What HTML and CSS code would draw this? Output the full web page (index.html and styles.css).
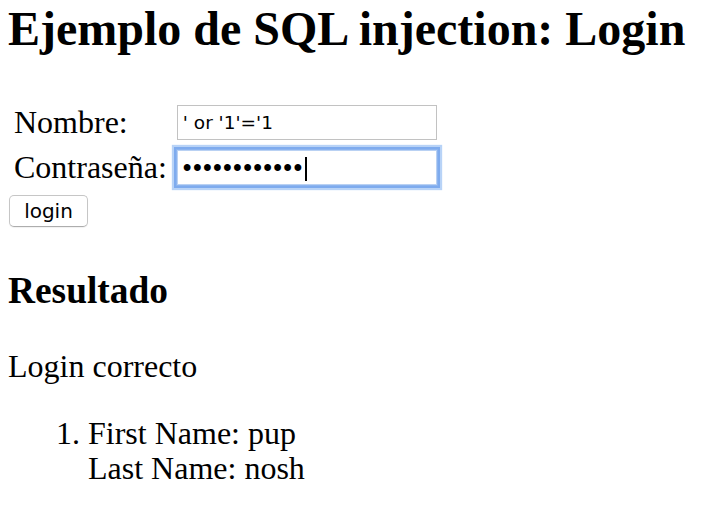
FILE: index.html
```html
<!DOCTYPE html>
<html lang="es">
<head>
<meta charset="utf-8">
<title>Ejemplo de SQL injection: Login</title>
<link rel="stylesheet" href="styles.css">
</head>
<body>
<h1 class="title">Ejemplo de SQL injection: Login</h1>
<form class="login-form">
  <table class="form-table">
    <tr>
      <td class="label-cell">Nombre:</td>
      <td><input class="field" type="text" name="nombre" value="' or '1'='1"></td>
    </tr>
    <tr>
      <td class="label-cell">Contraseña:</td>
      <td><span class="pw-wrap"><input class="field field-focus" type="password" name="pass" value="abcdefghijkl"><span class="caret"></span></span></td>
    </tr>
  </table>
  <button class="login-btn" type="button">login</button>
</form>
<h3 class="result-title">Resultado</h3>
<p class="result-msg">Login correcto</p>
<ol class="result-list">
  <li>First Name: pup<br>Last Name: nosh</li>
</ol>
</body>
</html>
```
FILE: styles.css
```css
html, body {
  margin: 0;
  padding: 0;
}
body {
  padding: 0 8px;
  font-family: "Liberation Serif", "Times New Roman", serif;
  font-size: 32px;
  line-height: 35px;
  color: #000;
  background: #fff;
}
.title {
  margin: 1px 0 41px;
  font-size: 48px;
  line-height: 56px;
  font-weight: bold;
}
.login-form {
  margin: 0;
}
.form-table {
  border-collapse: separate;
  border-spacing: 4px;
  margin: 0;
}
.form-table td {
  padding: 2px;
  vertical-align: middle;
}
.form-table .label-cell {
  white-space: nowrap;
  padding-right: 4px;
}
.field {
  box-sizing: border-box;
  display: block;
  width: 260px;
  height: 35px;
  margin: 1px 0;
  padding: 0 5px;
  border: 1px solid #c2c2c2;
  border-radius: 0;
  background: #fff;
  font-family: "DejaVu Sans", "Liberation Sans", sans-serif;
  font-size: 18.5px;
  color: #000;
  outline: none;
}
.pw-wrap {
  position: relative;
  display: block;
}
.field-focus {
  border: 1px solid #b9d1f3;
  box-shadow: 0 0 0 1px #8cb4ef, 0 0 0 3px #7eabee, 0 0 1px 5px #b8d3f7;
  font-family: "Liberation Sans", sans-serif;
  font-size: 25px;
  letter-spacing: 1.3px;
}
.caret {
  position: absolute;
  left: 128px;
  top: 7px;
  width: 2px;
  height: 24px;
  background: #000;
}
.login-btn {
  display: block;
  box-sizing: border-box;
  width: 79px;
  height: 32px;
  margin: 3px 0 0 1px;
  padding: 0;
  border: 1px solid #c6c6c6;
  border-bottom-color: #adadad;
  border-radius: 5px;
  background: #fff;
  box-shadow: 0 1px 1px rgba(0,0,0,0.06);
  font-family: "DejaVu Sans", "Liberation Sans", sans-serif;
  font-size: 20px;
  color: #000;
}
.result-title {
  margin: 43px 0 37px;
  font-size: 37.4px;
  line-height: 42px;
  font-weight: bold;
}
.result-msg {
  margin: 0 0 32px;
}
.result-list {
  margin: 0;
  padding-left: 80px;
}
```
